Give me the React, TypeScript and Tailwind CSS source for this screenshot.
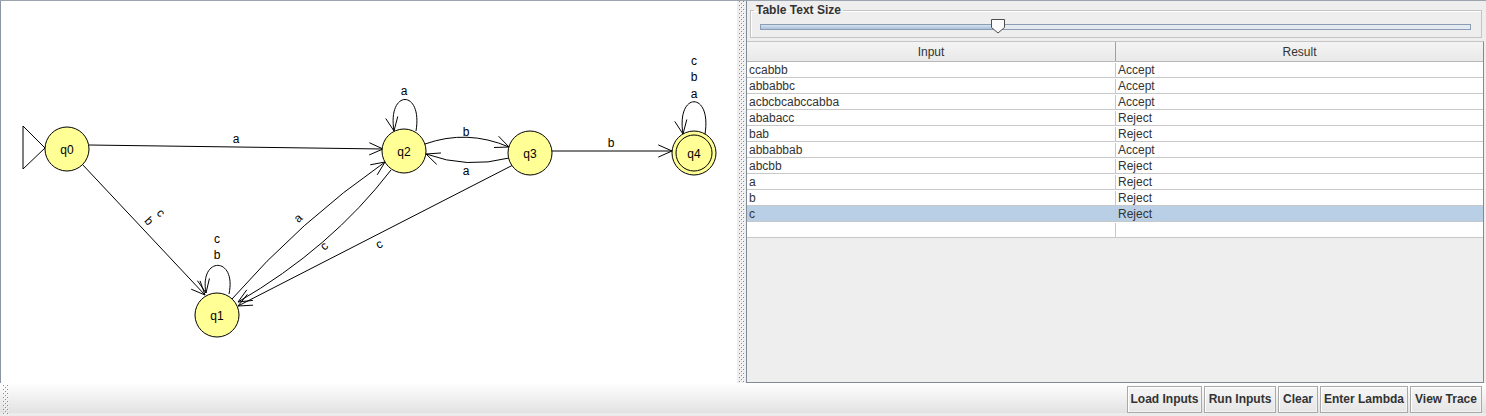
import React from "react";

type P = [number, number];

function Arrow({ tip, from }: { tip: P; from: P }) {
  const a = Math.atan2(tip[1] - from[1], tip[0] - from[0]);
  const L = 15;
  const t = (24 * Math.PI) / 180;
  const p1: P = [tip[0] - L * Math.cos(a - t), tip[1] - L * Math.sin(a - t)];
  const p2: P = [tip[0] - L * Math.cos(a + t), tip[1] - L * Math.sin(a + t)];
  return (
    <path
      d={`M ${p1[0]} ${p1[1]} L ${tip[0]} ${tip[1]} L ${p2[0]} ${p2[1]}`}
      fill="none"
      stroke="#000"
      strokeWidth={1}
    />
  );
}

function Label({ x, y, t, r = 0 }: { x: number; y: number; t: string; r?: number }) {
  return (
    <text
      x={x}
      y={y}
      textAnchor="middle"
      dominantBaseline="central"
      fontSize={12}
      fontFamily="'Liberation Sans', Arial, sans-serif"
      fill="#000"
      transform={r ? `rotate(${r} ${x} ${y})` : undefined}
    >
      {t}
    </text>
  );
}

function State({ x, y, name, final }: { x: number; y: number; name: string; final?: boolean }) {
  return (
    <g>
      <circle cx={x} cy={y} r={22} fill="#ffff96" stroke="#000" strokeWidth={1} />
      {final && <circle cx={x} cy={y} r={18} fill="none" stroke="#000" strokeWidth={1} />}
      <text
        x={x}
        y={y + 1}
        textAnchor="middle"
        dominantBaseline="central"
        fontSize={12}
        fontFamily="'Liberation Sans', Arial, sans-serif"
        fill="#000"
      >
        {name}
      </text>
    </g>
  );
}

function Diagram() {
  const s = { fill: "none", stroke: "#000", strokeWidth: 1 } as const;
  return (
    <svg width={737} height={382} viewBox="0 0 737 382" className="block">
      {/* q0 -> q2 */}
      <path d="M 88 144 L 382 148" {...s} />
      <Arrow tip={[382, 148]} from={[88, 144]} />
      <Label x={235} y={138} t="a" />
      {/* q0 -> q1 */}
      <path d="M 81 163 L 204 294" {...s} />
      <Arrow tip={[204, 294]} from={[81, 163]} />
      <Label x={148} y={220} t="b" r={47} />
      <Label x={160} y={212} t="c" r={47} />
      {/* q1 loop */}
      <path d="M 228 293 C 236 255, 198 255, 205 292" {...s} />
      <Arrow tip={[205, 292]} from={[198, 255]} />
      <Label x={216} y={254} t="b" />
      <Label x={216} y={238} t="c" />
      {/* q1 -> q2 a */}
      <path d="M 231 298 Q 299 220 384 161" {...s} />
      <Arrow tip={[384, 161]} from={[299, 220]} />
      <Label x={297} y={217} t="a" r={-42} />
      {/* q2 -> q1 c */}
      <path d="M 390 169 Q 330 247 237 301" {...s} />
      <Arrow tip={[237, 301]} from={[330, 247]} />
      <Label x={323} y={245} t="c" r={-42} />
      {/* q3 -> q1 c */}
      <path d="M 512 164 L 237 305" {...s} />
      <Arrow tip={[237, 305]} from={[512, 164]} />
      <Label x={378} y={243} t="c" r={-27} />
      {/* q2 -> q3 b */}
      <path d="M 424 143 Q 466 128 508 146" {...s} />
      <Arrow tip={[508, 146]} from={[466, 129]} />
      <Label x={465} y={131} t="b" />
      {/* q3 -> q2 a */}
      <path d="M 508 157 Q 466 168 425 153" {...s} />
      <Arrow tip={[425, 153]} from={[466, 168]} />
      <Label x={465} y={170} t="a" />
      {/* q3 -> q4 b */}
      <path d="M 551 150 L 671 150" {...s} />
      <Arrow tip={[671, 150]} from={[551, 150]} />
      <Label x={610} y={142} t="b" />
      {/* q2 loop */}
      <path d="M 415 130 C 422 88, 386 88, 393 130" {...s} />
      <Arrow tip={[393, 130]} from={[386, 88]} />
      <Label x={403} y={90} t="a" />
      {/* q4 loop */}
      <path d="M 704 133 C 711 90, 675 90, 682 133" {...s} />
      <Arrow tip={[682, 133]} from={[675, 90]} />
      <Label x={693} y={93} t="a" />
      <Label x={693} y={76} t="b" />
      <Label x={693} y={60} t="c" />
      {/* initial arrow */}
      <polygon points="22,125 22,168 44,147" fill="#fff" stroke="#000" strokeWidth={1} />
      <State x={66} y={148} name="q0" />
      <State x={216} y={314} name="q1" />
      <State x={403} y={150} name="q2" />
      <State x={529} y={152} name="q3" />
      <State x={693} y={152} name="q4" final />
    </svg>
  );
}

function Grip({ w, h }: { w: number; h: number }) {
  return (
    <svg width={w} height={h} className="block">
      <defs>
        <pattern id={`g${w}x${h}`} width="4" height="4" patternUnits="userSpaceOnUse">
          <rect x="0" y="0" width="1" height="1" fill="#8c8c8c" />
          <rect x="2" y="2" width="1" height="1" fill="#8c8c8c" />
          <rect x="1" y="1" width="1" height="1" fill="#fafafa" />
          <rect x="3" y="3" width="1" height="1" fill="#fafafa" />
        </pattern>
      </defs>
      <rect x="0" y="0" width={w} height={h} fill={`url(#g${w}x${h})`} />
    </svg>
  );
}

const rows: [string, string][] = [
  ["ccabbb", "Accept"],
  ["abbabbc", "Accept"],
  ["acbcbcabccabba", "Accept"],
  ["ababacc", "Reject"],
  ["bab", "Reject"],
  ["abbabbab", "Accept"],
  ["abcbb", "Reject"],
  ["a", "Reject"],
  ["b", "Reject"],
  ["c", "Reject"],
  ["", ""],
];

function Btn({ label, w }: { label: string; w: string }) {
  return (
    <div
      className={`${w} h-[27px] flex items-center justify-center border border-[#a9a9a9] bg-gradient-to-b from-[#f6f6f6] to-[#e6e6e6] shadow-[inset_1px_1px_0_#ffffff,inset_-1px_-1px_0_#f2f2f2] text-[12px] font-bold text-[#333333] whitespace-nowrap`}
    >
      {label}
    </div>
  );
}

export default function App() {
  return (
    <div className="w-[1486px] h-[416px] flex flex-col bg-[#eeeeee] font-['Liberation_Sans',Arial,sans-serif] overflow-hidden">
      <div className="h-[383px] flex border-t border-[#9aa5b0]">
        {/* canvas */}
        <div className="w-[737px] h-full bg-white border-l border-[#8a97a3] overflow-hidden">
          <Diagram />
        </div>
        {/* divider */}
        <div className="w-[9px] h-full bg-[#eeeeee] flex justify-center pl-[1px]">
          <Grip w={6} h={382} />
        </div>
        {/* right panel */}
        <div className="flex-1 h-full flex flex-col border-l border-[#7f8b97]">
          <fieldset className="ml-[3px] mr-[4px] mt-[2px] border border-[#c4c4c4] shadow-[inset_1px_1px_0_#ffffff] pb-[2px]">
            <legend className="ml-[3px] px-[2px] text-[12px] leading-[15px] font-bold text-[#333333]">
              Table Text Size
            </legend>
            <div className="relative h-[17px] flex items-center px-[9px]">
              <div className="flex-1 h-[6px] mr-[1px] border border-[#8a9db3] bg-[#e3eaf1] flex">
                <div className="w-[236px] h-full bg-gradient-to-b from-[#d6e3f0] to-[#a9c0da]" />
              </div>
              <svg
                width={16}
                height={16}
                viewBox="0 0 16 16"
                className="absolute left-[239px] top-[0px]"
              >
                <path
                  d="M 1.5 1.5 L 14.5 1.5 L 14.5 9.5 L 8 15 L 1.5 9.5 Z"
                  fill="#fbfbfb"
                  stroke="#4d4d4d"
                  strokeWidth={1}
                />
              </svg>
            </div>
          </fieldset>
          <div className="mt-[3px] mr-[2px] flex-1 flex flex-col border-r border-b border-[#7f8b97] border-t border-t-[#c6c6c6]">
            <div className="h-[20px] flex bg-gradient-to-b from-[#f4f4f4] to-[#e9e9e9] border-b border-[#b8b8b8] text-[12px] text-[#333333]">
              <div className="w-[369px] flex items-center justify-center border-r border-[#a0a0a0]">Input</div>
              <div className="flex-1 flex items-center justify-center">Result</div>
            </div>
            {rows.map(([i, r], idx) => (
              <div
                key={idx}
                className={`h-[16px] flex border-b border-[#c8c8c8] text-[12px] leading-[14px] pt-[1px] text-[#333333] ${
                  idx === 9 ? "bg-[#b8cfe5]" : "bg-white"
                }`}
              >
                <div className="w-[369px] pl-[2px] border-r border-[#c8c8c8] whitespace-nowrap">{i}</div>
                <div className="flex-1 pl-[2px] whitespace-nowrap">{r}</div>
              </div>
            ))}
            <div className="flex-1 bg-[#eeeeee]" />
          </div>
        </div>
      </div>
      {/* bottom bar */}
      <div className="h-[33px] flex items-center bg-gradient-to-b from-[#ffffff] to-[#e2e2e2] border-b-[3px] border-[#ececec]">
        <div className="h-full pl-[3px] pt-[2px]">
          <Grip w={6} h={30} />
        </div>
        <div className="flex-1" />
        <div className="flex gap-[2px] mr-[4px] mt-[2px]">
          <Btn label="Load Inputs" w="w-[75px]" />
          <Btn label="Run Inputs" w="w-[72px]" />
          <Btn label="Clear" w="w-[40px]" />
          <Btn label="Enter Lambda" w="w-[88px]" />
          <Btn label="View Trace" w="w-[72px]" />
        </div>
      </div>
    </div>
  );
}
